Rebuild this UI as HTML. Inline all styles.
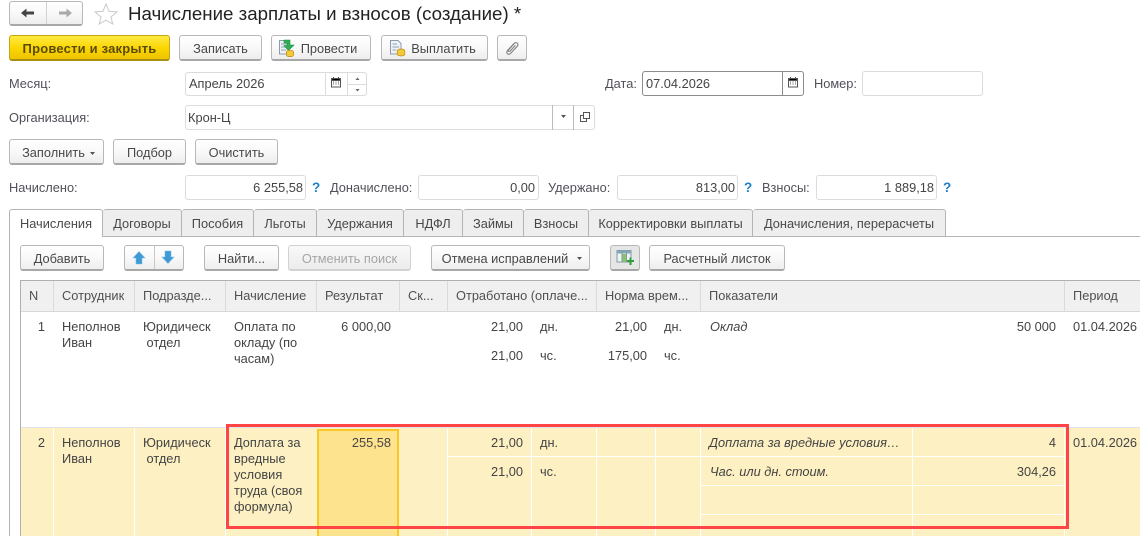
<!DOCTYPE html>
<html lang="ru"><head><meta charset="utf-8"><title>Начисление зарплаты и взносов</title>
<style>
html,body{margin:0;padding:0;background:#fff}
#p{position:relative;width:1140px;height:536px;overflow:hidden;background:#fff;font:12.800px/14px "Liberation Sans",Arial,sans-serif;color:#444}
#p div,#p svg{position:absolute;box-sizing:border-box}
.t{white-space:nowrap}
.r{white-space:nowrap;text-align:right}
.l{color:#50505a}
.b{border:1px solid #b8b8b8;border-bottom:2px solid #a8a8a8;border-radius:3px;background:linear-gradient(#fff,#f9f9f9 50%,#eeeeee);text-align:center;line-height:25px;white-space:nowrap;color:#484848}
.f{border:1px solid #dcdcdc;border-radius:3px;background:#fff}
.q{color:#1b7fc4;font-weight:bold;font-size:13.500px;white-space:nowrap}
.tab{background:#eee;border:1px solid #b4b4b4;border-bottom:0;border-left:0;border-radius:3px 3px 0 0;text-align:center;line-height:27px;height:27px;top:209px;white-space:nowrap;color:#484848}
.th{top:281px;height:30px;line-height:30px;padding-left:8px;white-space:nowrap;background:#f0f0f0;border-right:1px solid #dadada;color:#505050}
.v{width:1px;top:428px;height:108px;background:#fff}
.h{height:1px;background:#fff}
i.x{font-style:italic}
</style></head><body><div id="p">

<!-- nav -->
<div class="b" style="left:9px;top:1px;width:74px;height:25px"></div>
<div style="left:46px;top:2px;width:1px;height:22px;background:#d2d2d2"></div>
<svg style="left:20px;top:7px" width="16" height="12" viewBox="0 0 16 12"><path d="M1 6L6.500 1.500V4.500H14V7.500H6.500V10.500Z" fill="#444"/></svg>
<svg style="left:57px;top:7px" width="16" height="12" viewBox="0 0 16 12"><path d="M15 6L9.500 1.500V4.500H2V7.500H9.500V10.500Z" fill="#aaa"/></svg>
<svg style="left:94px;top:3px" width="24" height="22" viewBox="0 0 24 22"><path d="M12 1L15 8.300 23 8.900 16.900 14 18.800 21 12 17.200 5.200 21 7.100 14 1 8.900 9 8.300Z" fill="#fff" stroke="#c9c9c9"/></svg>
<div class="t" style="left:128px;top:3px;font-size:18.700px;line-height:22px;color:#222">Начисление зарплаты и взносов (создание) *</div>

<!-- command bar -->
<div class="b" style="left:9px;top:35px;width:161px;height:26px;background:linear-gradient(#ffea44,#fbd500 55%,#eec300);border-color:#c6a711;border-bottom-color:#a98f10;font-weight:bold;font-size:13px;letter-spacing:.2px;color:#5a4c05">Провести и закрыть</div>
<div class="b" style="left:179px;top:35px;width:83px;height:26px">Записать</div>
<div class="b" style="left:271px;top:35px;width:100px;height:26px;padding-left:16px">Провести</div>
<svg style="left:278px;top:39px" width="17" height="18" viewBox="0 0 17 18"><path d="M1.500 1.500H11V15H1.500Z" fill="#eef2f6" stroke="#8d9cad"/><path d="M3 5H9M3 8H8M3 11H8" stroke="#92a2b3"/><path d="M6 1H12V6H16L10.500 11.500 6 6.500H9V4H6Z" fill="#2fae55" stroke="#1c8c40" stroke-width=".6"/><ellipse cx="12" cy="13" rx="3.500" ry="1.800" fill="#f4c93a" stroke="#b98a12" stroke-width=".7"/><path d="M8.500 13V16c0 1 1.500 1.600 3.500 1.600s3.500-.6 3.500-1.600V13" fill="#f4c93a" stroke="#b98a12" stroke-width=".7"/></svg>
<div class="b" style="left:381px;top:35px;width:107px;height:26px;padding-left:18px">Выплатить</div>
<svg style="left:389px;top:39px" width="17" height="18" viewBox="0 0 17 18"><path d="M1.500 1.500H9L12 4.500V15H1.500Z" fill="#eef2f6" stroke="#8d9cad"/><path d="M3.500 5H8M3.500 8H10M3.500 11H7" stroke="#92a2b3"/><ellipse cx="12" cy="12" rx="3.800" ry="2" fill="#f4c93a" stroke="#b98a12" stroke-width=".7"/><path d="M8.200 12V15.200c0 1 1.700 1.800 3.800 1.800s3.800-.8 3.800-1.800V12" fill="#f4c93a" stroke="#b98a12" stroke-width=".7"/></svg>
<div class="b" style="left:497px;top:35px;width:30px;height:26px"></div>
<svg style="left:504px;top:40px" width="16" height="16" viewBox="0 0 16 16"><path d="M10.500 3L3.500 10.500C1.500 13 4.500 15.500 6.500 13.500L13.500 6C15 4 12.500 1.500 10.500 3.200L4.800 9.600C3.800 11 5 12 6.200 11L11.500 5.200" fill="none" stroke="#808080" stroke-width="1.100"/></svg>

<!-- month -->
<div class="t l" style="left:9px;top:77px">Месяц:</div>
<div class="f" style="left:185px;top:72px;width:182px;height:24px"></div>
<div style="left:325px;top:72px;width:1px;height:24px;background:#dcdcdc"></div>
<div style="left:347px;top:72px;width:1px;height:24px;background:#dcdcdc"></div>
<div style="left:347px;top:84px;width:20px;height:1px;background:#dcdcdc"></div>
<div class="t" style="left:189px;top:77px">Апрель 2026</div>
<svg style="left:331px;top:77px" width="10" height="11" viewBox="0 0 10 11"><path d="M.5 1.500H9.500V10H.5Z" fill="#fff" stroke="#555"/><path d="M1 1.500H9V3.500H1ZM2.500 0V2M7.500 0V2" stroke="#555"/><path d="M2 5H3M4.500 5H5.500M7 5H8M2 7H3M4.500 7H5.500M7 7H8" stroke="#555"/></svg>
<svg style="left:354px;top:76px" width="7" height="18" viewBox="0 0 7 18"><path d="M1.500 4H5.500L3.500 1.500ZM1.500 13H5.500L3.500 15.500Z" fill="#666"/></svg>

<!-- date / number -->
<div class="t l" style="left:605px;top:77px">Дата:</div>
<div class="f" style="left:642px;top:71px;width:162px;height:25px;border-color:#8c8c8c"></div>
<div style="left:782px;top:72px;width:1px;height:23px;background:#8c8c8c"></div>
<div class="t" style="left:646px;top:77px">07.04.2026</div>
<svg style="left:788px;top:77px" width="10" height="11" viewBox="0 0 10 11"><path d="M.5 1.500H9.500V10H.5Z" fill="#fff" stroke="#555"/><path d="M1 1.500H9V3.500H1ZM2.500 0V2M7.500 0V2" stroke="#555"/><path d="M2 5H3M4.500 5H5.500M7 5H8M2 7H3M4.500 7H5.500M7 7H8" stroke="#555"/></svg>
<div class="t l" style="left:814px;top:77px">Номер:</div>
<div class="f" style="left:862px;top:71px;width:121px;height:25px"></div>

<!-- org -->
<div class="t l" style="left:9px;top:111px">Организация:</div>
<div class="f" style="left:185px;top:105px;width:410px;height:25px"></div>
<div style="left:552px;top:105px;width:1px;height:25px;background:#bbb"></div>
<div style="left:573px;top:105px;width:1px;height:25px;background:#bbb"></div>
<div class="t" style="left:188px;top:111px">Крон-Ц</div>
<svg style="left:560px;top:114px" width="7" height="5" viewBox="0 0 7 5"><path d="M1 1H6L3.500 4Z" fill="#555"/></svg>
<svg style="left:580px;top:112px" width="10" height="10" viewBox="0 0 10 10"><path d="M3.500.5H9.500V6.500H3.500Z" fill="none" stroke="#555"/><path d="M3.500 3.500H.5V9.500H6.500V6.500" fill="none" stroke="#555"/></svg>

<!-- fill -->
<div class="b" style="left:9px;top:139px;width:95px;height:26px;padding-right:6px">Заполнить</div>
<svg style="left:89px;top:151px" width="7" height="5" viewBox="0 0 7 5"><path d="M1 1H6L3.500 4Z" fill="#555"/></svg>
<div class="b" style="left:113px;top:139px;width:73px;height:26px">Подбор</div>
<div class="b" style="left:195px;top:139px;width:83px;height:26px">Очистить</div>

<!-- totals -->
<div class="t l" style="left:9px;top:181px">Начислено:</div>
<div class="f" style="left:185px;top:175px;width:121px;height:25px"></div>
<div class="r" style="left:185px;top:181px;width:118px">6 255,58</div>
<div class="q" style="left:312px;top:181px">?</div>
<div class="t l" style="left:330px;top:181px">Доначислено:</div>
<div class="f" style="left:418px;top:175px;width:121px;height:25px"></div>
<div class="r" style="left:418px;top:181px;width:117px">0,00</div>
<div class="t l" style="left:548px;top:181px">Удержано:</div>
<div class="f" style="left:617px;top:175px;width:121px;height:25px"></div>
<div class="r" style="left:617px;top:181px;width:118px">813,00</div>
<div class="q" style="left:744px;top:181px">?</div>
<div class="t l" style="left:762px;top:181px">Взносы:</div>
<div class="f" style="left:816px;top:175px;width:121px;height:25px"></div>
<div class="r" style="left:816px;top:181px;width:118px">1 889,18</div>
<div class="q" style="left:943px;top:181px">?</div>

<!-- tabs -->
<div style="left:9px;top:236px;width:1131px;height:1px;background:#b4b4b4"></div>
<div style="left:9px;top:236px;width:1px;height:300px;background:#b4b4b4"></div>
<div class="tab" style="left:9px;width:94px;height:28px;background:#fff;border-left:1px solid #b4b4b4;z-index:2">Начисления</div>
<div class="tab" style="left:103px;width:79px">Договоры</div>
<div class="tab" style="left:182px;width:72px">Пособия</div>
<div class="tab" style="left:254px;width:63px">Льготы</div>
<div class="tab" style="left:317px;width:87px">Удержания</div>
<div class="tab" style="left:404px;width:59px">НДФЛ</div>
<div class="tab" style="left:463px;width:61px">Займы</div>
<div class="tab" style="left:524px;width:65px">Взносы</div>
<div class="tab" style="left:589px;width:164px">Корректировки выплаты</div>
<div class="tab" style="left:753px;width:193px">Доначисления, перерасчеты</div>

<!-- toolbar -->
<div class="b" style="left:20px;top:245px;width:84px;height:26px">Добавить</div>
<div class="b" style="left:124px;top:245px;width:60px;height:26px"></div>
<div style="left:154px;top:246px;width:1px;height:23px;background:#c8c8c8"></div>
<svg style="left:131px;top:250px" width="16" height="16" viewBox="0 0 16 16"><path d="M8 1.500L14 8H11V14H5V8H2Z" fill="#3d9ad6" stroke="#7dbbe4" stroke-width=".6"/></svg>
<svg style="left:160px;top:249px" width="16" height="16" viewBox="0 0 16 16"><path d="M8 14.500L14 8H11V2H5V8H2Z" fill="#3d9ad6" stroke="#7dbbe4" stroke-width=".6"/></svg>
<div class="b" style="left:204px;top:245px;width:75px;height:26px">Найти...</div>
<div class="b" style="left:288px;top:245px;width:123px;height:26px;border-color:#d2d2d2;color:#a6a6a6;background:linear-gradient(#f9f9f9,#ececec)">Отменить поиск</div>
<div class="b" style="left:431px;top:245px;width:159px;height:26px;padding-right:11px">Отмена исправлений</div>
<svg style="left:576px;top:256px" width="7" height="5" viewBox="0 0 7 5"><path d="M1 1H6L3.500 4Z" fill="#555"/></svg>
<div class="b" style="left:610px;top:245px;width:30px;height:26px;background:#e6e6e6"></div>
<svg style="left:616px;top:249px" width="18" height="18" viewBox="0 0 18 18"><path d="M1 1.500H15V13H1Z" fill="#eef3f4" stroke="#7f99a8"/><path d="M1 1.500H15V4.500H1Z" fill="#86a8b8"/><path d="M6 2V13M10.500 2V13" stroke="#7f99a8"/><path d="M6.500 5H10V13H6.500Z" fill="#8fc06a"/><path d="M11 11H13.500V8.500H15.500V11H18V13H15.500V16H13.500V13H11Z" fill="#2e9e38"/></svg>
<div class="b" style="left:649px;top:245px;width:136px;height:26px">Расчетный листок</div>

<!-- table -->
<div style="left:20px;top:280px;width:1120px;height:1px;background:#b0b0b0"></div>
<div style="left:20px;top:280px;width:1px;height:256px;background:#b0b0b0"></div>
<div class="th" style="left:21px;width:33px">N</div>
<div class="th" style="left:54px;width:81px">Сотрудник</div>
<div class="th" style="left:135px;width:91px">Подразде...</div>
<div class="th" style="left:226px;width:91px">Начисление</div>
<div class="th" style="left:317px;width:83px">Результат</div>
<div class="th" style="left:400px;width:48px">Ск...</div>
<div class="th" style="left:448px;width:149px">Отработано (оплаче...</div>
<div class="th" style="left:597px;width:104px">Норма врем...</div>
<div class="th" style="left:701px;width:364px">Показатели</div>
<div class="th" style="left:1065px;width:75px;border-right:0">Период</div>
<div style="left:21px;top:311px;width:1119px;height:1px;background:#d8d8d8"></div>

<!-- row 1 -->
<div class="r" style="left:21px;top:320px;width:24px">1</div>
<div class="t" style="left:62px;top:319px;line-height:16px">Неполнов<br>Иван</div>
<div class="t" style="left:143px;top:319px;line-height:16px">Юридическ<br>&nbsp;отдел</div>
<div class="t" style="left:234px;top:319px;line-height:16px">Оплата по<br>окладу (по<br>часам)</div>
<div class="r" style="left:317px;top:320px;width:74px">6 000,00</div>
<div class="r" style="left:448px;top:320px;width:75px">21,00</div>
<div class="t" style="left:540px;top:320px">дн.</div>
<div class="r" style="left:448px;top:349px;width:75px">21,00</div>
<div class="t" style="left:540px;top:349px">чс.</div>
<div class="r" style="left:597px;top:320px;width:50px">21,00</div>
<div class="t" style="left:664px;top:320px">дн.</div>
<div class="r" style="left:597px;top:349px;width:50px">175,00</div>
<div class="t" style="left:664px;top:349px">чс.</div>
<div class="t" style="left:710px;top:320px"><i class="x">Оклад</i></div>
<div class="r" style="left:912px;top:320px;width:144px">50 000</div>
<div class="t" style="left:1073px;top:320px">01.04.2026</div>

<!-- row 2 -->
<div style="left:21px;top:427px;width:1119px;height:1px;background:#e2e2ea"></div>
<div style="left:21px;top:428px;width:1119px;height:108px;background:#fdf0c3"></div>
<div class="v" style="left:53px"></div><div class="v" style="left:134px"></div><div class="v" style="left:225px"></div>
<div class="v" style="left:447px"></div><div class="v" style="left:531px"></div><div class="v" style="left:596px"></div><div class="v" style="left:655px"></div><div class="v" style="left:700px"></div><div class="v" style="left:912px"></div><div class="v" style="left:1064px"></div>
<div class="h" style="left:447px;top:456px;width:617px"></div>
<div class="h" style="left:701px;top:485px;width:363px"></div>
<div class="h" style="left:701px;top:514px;width:363px"></div>
<div style="left:317px;top:429px;width:82px;height:107px;background:#fee38f;border:2px solid #f9c823;border-bottom:0"></div>
<div class="r" style="left:21px;top:436px;width:24px">2</div>
<div class="t" style="left:62px;top:435px;line-height:16px">Неполнов<br>Иван</div>
<div class="t" style="left:143px;top:435px;line-height:16px">Юридическ<br>&nbsp;отдел</div>
<div class="t" style="left:234px;top:435px;line-height:16px">Доплата за<br>вредные<br>условия<br>труда (своя<br>формула)</div>
<div class="r" style="left:317px;top:436px;width:74px">255,58</div>
<div class="r" style="left:448px;top:436px;width:75px">21,00</div>
<div class="t" style="left:540px;top:436px">дн.</div>
<div class="r" style="left:448px;top:465px;width:75px">21,00</div>
<div class="t" style="left:540px;top:465px">чс.</div>
<div class="t" style="left:709px;top:436px"><i class="x">Доплата за вредные условия…</i></div>
<div class="r" style="left:912px;top:436px;width:144px">4</div>
<div class="t" style="left:710px;top:465px"><i class="x">Час. или дн. стоим.</i></div>
<div class="r" style="left:912px;top:465px;width:144px">304,26</div>
<div class="t" style="left:1073px;top:436px">01.04.2026</div>

<!-- red highlight -->
<div style="left:226px;top:424px;width:843px;height:105px;border:3px solid #fe4444;z-index:5"></div>
</div></body></html>
